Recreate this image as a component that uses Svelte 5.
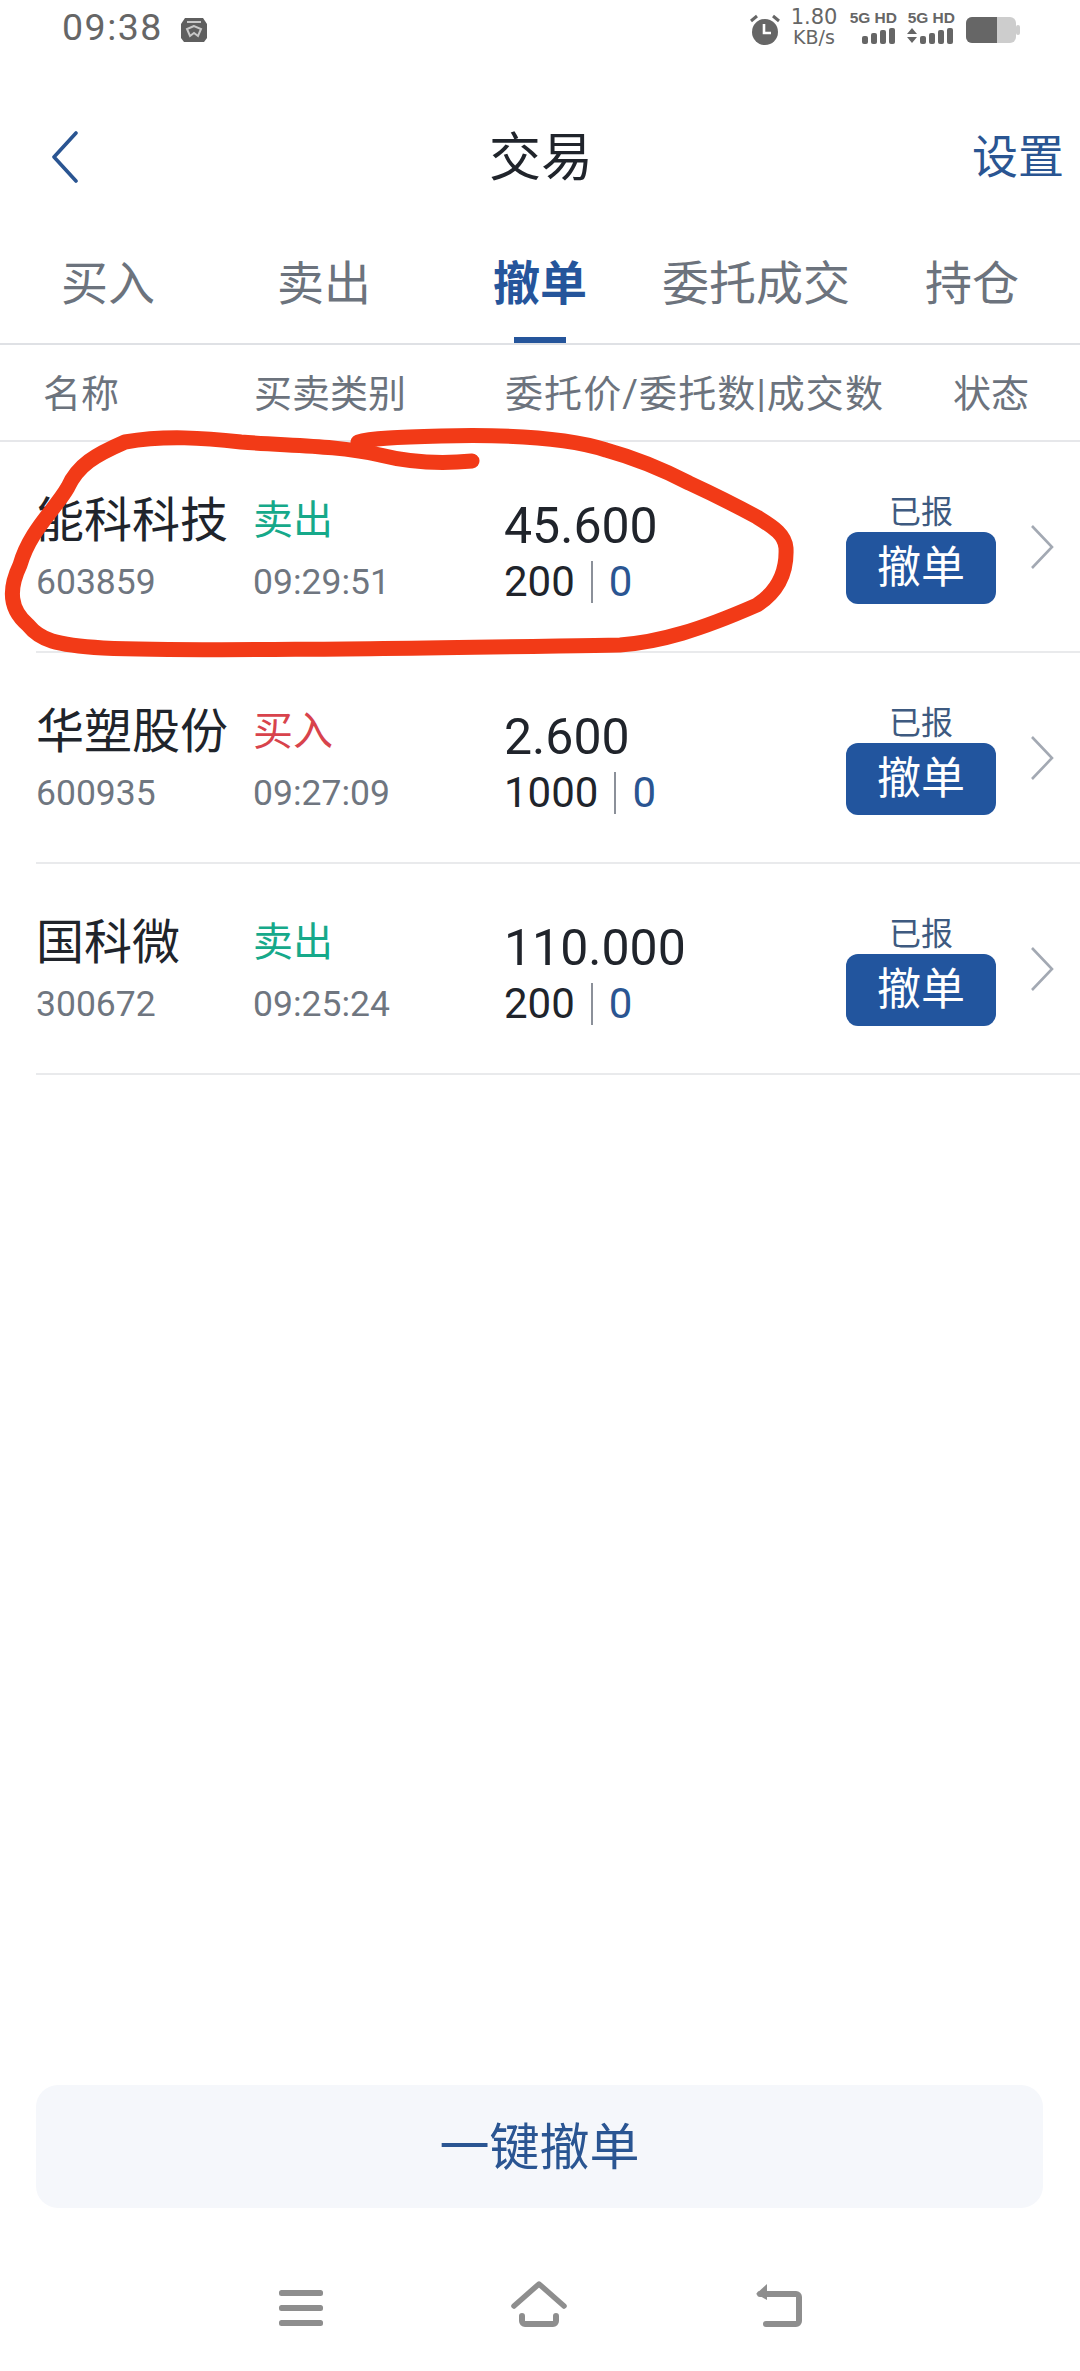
<script>
  const tabs = ['买入', '卖出', '撤单', '委托成交', '持仓'];
  const orders = [
    { name: '能科科技', code: '603859', side: '卖出', sell: true, time: '09:29:51', price: '45.600', qty: '200' },
    { name: '华塑股份', code: '600935', side: '买入', sell: false, time: '09:27:09', price: '2.600', qty: '1000' },
    { name: '国科微', code: '300672', side: '卖出', sell: true, time: '09:25:24', price: '110.000', qty: '200' }
  ];
</script>

<div class="page">
  <div class="status">
    <div class="left">
      <span class="clock">09:38</span>
      <svg class="bug" width="30" height="28" viewBox="0 0 30 28"><path d="M6 3h18l4 6v14l-3 4H5l-3-4V9z" fill="#5f5f5f"/><path d="M8 7h14M15 11l-7 3 3 7 4-3 4 3 3-7z" stroke="#c8c8c8" stroke-width="2" fill="none"/></svg>
    </div>
    <div class="right">
      <svg class="alarm" width="32" height="34" viewBox="0 0 32 34"><circle cx="16" cy="19" r="13" fill="#666"/><path d="M15 11v9h7" stroke="#fff" stroke-width="2.6" fill="none"/><path d="M2 8l6-5M30 8l-6-5" stroke="#666" stroke-width="3"/></svg>
      <div class="speed"><span>1.80</span><span class="unit">KB/s</span></div>
      <div class="sig first">
        <span>5G HD</span>
        <svg width="36" height="18" viewBox="0 0 36 18"><g fill="#666"><rect x="1" y="9" width="6" height="8" rx="2"/><rect x="10" y="6" width="6" height="11" rx="2"/><rect x="19" y="3" width="6" height="14" rx="2"/><rect x="28" y="1" width="6" height="16" rx="2"/></g></svg>
      </div>
      <div class="sig">
        <span>5G HD</span>
        <svg width="48" height="18" viewBox="0 0 48 18"><g fill="#666"><path d="M0 7l5-6 5 6zM0 10l5 6 5-6z"/><rect x="13" y="9" width="6" height="8" rx="2"/><rect x="22" y="6" width="6" height="11" rx="2"/><rect x="31" y="3" width="6" height="14" rx="2"/><rect x="40" y="1" width="6" height="16" rx="2"/></g></svg>
      </div>
      <svg class="batt" width="56" height="28" viewBox="0 0 56 28"><rect x="0" y="1" width="50" height="26" rx="6" fill="#cdcdcd"/><rect x="50" y="9" width="4" height="10" rx="2" fill="#cdcdcd"/><path d="M6 1h25v26H6a6 6 0 0 1-6-6V7a6 6 0 0 1 6-6z" fill="#666"/></svg>
    </div>
  </div>

  <header class="head">
    <svg class="back" width="30" height="52" viewBox="0 0 30 52"><path d="M26 2 L4 26 L26 50" fill="none" stroke="#2a5592" stroke-width="3.6" stroke-linecap="round" stroke-linejoin="round"/></svg>
    <h1>交易</h1>
    <span class="settings">设置</span>
  </header>

  <nav class="tabs">
    {#each tabs as t, i}
      <div class="tab" class:active={i === 2}>{t}</div>
    {/each}
  </nav>

  <div class="cols">
    <span class="c1">名称</span>
    <span class="c2">买卖类别</span>
    <span class="c3">委托价/委托数|成交数</span>
    <span class="c4">状态</span>
  </div>

  <div class="list">
    {#each orders as o}
      <div class="row">
        <div class="stock">
          <div class="name">{o.name}</div>
          <div class="sub">{o.code}</div>
        </div>
        <div class="kind">
          <div class="side" class:sell={o.sell} class:buy={!o.sell}>{o.side}</div>
          <div class="sub">{o.time}</div>
        </div>
        <div class="nums">
          <div class="price">{o.price}</div>
          <div class="qty">{o.qty}<i></i><b>0</b></div>
        </div>
        <div class="state">
          <div class="reported">已报</div>
          <div class="cancel">撤单</div>
        </div>
        <svg class="chev" width="24" height="44" viewBox="0 0 24 44"><path d="M2 1 L22 22 L2 43" fill="none" stroke="#a3a9b3" stroke-width="2.6"/></svg>
      </div>
    {/each}
  </div>

  <div class="foot">
    <div class="all">一键撤单</div>
    <div class="nav">
      <svg width="46" height="38" viewBox="0 0 46 38"><g fill="#8e8e8e"><rect x="1" y="1" width="44" height="6" rx="2.5"/><rect x="1" y="16" width="44" height="6" rx="2.5"/><rect x="1" y="31" width="44" height="6" rx="2.5"/></g></svg>
      <svg width="60" height="46" viewBox="0 0 60 46"><path d="M5 25 L30 3 L55 25" fill="none" stroke="#8e8e8e" stroke-width="5.5" stroke-linecap="round" stroke-linejoin="round"/><path d="M13 35v5a3 3 0 0 0 3 3h28a3 3 0 0 0 3-3v-5" fill="none" stroke="#8e8e8e" stroke-width="6" stroke-linecap="round"/></svg>
      <svg width="50" height="46" viewBox="0 0 50 46"><path d="M6 13H42a3 3 0 0 1 3 3V40a3 3 0 0 1-3 3H12" fill="none" stroke="#8e8e8e" stroke-width="6" stroke-linecap="round"/><path d="M13 3L2 13l11 6z" fill="#8e8e8e"/></svg>
    </div>
  </div>

  <svg class="scribble" width="1080" height="700" viewBox="0 0 1080 700">
    <path d="M472 461 C440 464 412 463 380 455 C335 445 290 446 241 442 C205 438 165 435 125 442 C95 455 78 465 68 487 C55 510 30 530 20 565 C8 590 10 610 28 625 C40 640 55 645 103 648 C200 652 420 648 620 645 C660 642 700 630 757 605 C780 590 787 570 786 548 C785 535 775 528 757 517 C735 505 715 495 689 483 C660 468 635 458 606 450 C575 440 520 434 441 436 C400 437 370 438 358 442" fill="none" stroke="#f23a17" stroke-width="15" stroke-linecap="round" stroke-linejoin="round"/>
  </svg>
</div>

<style>
  :global(body) { margin: 0; background: #fff; }
  .page {
    position: relative;
    width: 1080px;
    height: 2371px;
    display: flex;
    flex-direction: column;
    font-family: Roboto, "Noto Sans CJK SC", sans-serif;
    color: #20242b;
    overflow: hidden;
    background: #fff;
  }
  .status {
    height: 54px;
    display: flex;
    justify-content: space-between;
    align-items: center;
    padding: 0 58px 0 62px;
    box-sizing: border-box;
    color: #666;
  }
  .left { display: flex; align-items: center; gap: 16px; }
  .clock { font-size: 37.5px; letter-spacing: 1.5px; }
  .bug { margin-top: 4px; }
  .right { display: flex; align-items: center; }
  .alarm { margin-top: 6px; }
  .speed { margin-left: 10px; width: 46px; display: flex; flex-direction: column; align-items: center; font-size: 21px; line-height: 20px; font-family: "DejaVu Sans", sans-serif; }
  .speed .unit { font-size: 19px; }
  .sig { margin-left: 10px; display: flex; flex-direction: column; align-items: flex-end; font-size: 15.5px; font-weight: 700; line-height: 18px; width: 48px; white-space: nowrap; font-family: "Liberation Sans", sans-serif; }
  .sig.first { margin-left: 14px; width: 46px; }
  .batt { margin-left: 11px; margin-top: 6px; }

  .head {
    height: 98px;
    margin-top: 54px;
    display: grid;
    grid-template-columns: 1fr auto 1fr;
    align-items: center;
    padding: 0 16px 0 18px;
  }
  .back { justify-self: start; margin-left: 32px; }
  h1 { margin: 3px 0 0; font-size: 52px; font-weight: 400; line-height: 1; }
  .settings { justify-self: end; color: #2a5592; font-size: 46px; line-height: 1; }

  .tabs {
    height: 98px;
    margin-top: 39px;
    display: grid;
    grid-template-columns: repeat(5, 1fr);
    border-bottom: 2px solid #dfe1e5;
  }
  .tab {
    position: relative;
    text-align: center;
    font-size: 47px;
    line-height: 64px;
    color: #6c737d;
    padding-top: 7px;
  }
  .tab.active { color: #25559b; font-weight: 700; }
  .tab.active::after {
    content: "";
    position: absolute;
    left: 82px;
    right: 82px;
    bottom: 0;
    height: 6px;
    background: #25559b;
  }

  .cols {
    height: 95px;
    box-sizing: content-box;
    display: flex;
    align-items: center;
    font-size: 38px;
    color: #6c737d;
    border-bottom: 2px solid #e6e7ea;
    white-space: nowrap;
  }
  .cols span { margin-top: -4px; }
  .c1 { margin-left: 43px; width: 211px; }
  .c2 { width: 251px; }
  .c3 { width: 448px; letter-spacing: 1.1px; }

  .row {
    margin-left: 36px;
    height: 209px;
    display: flex;
    align-items: center;
    border-bottom: 2px solid #e9eaec;
  }
  .stock { width: 217px; margin-top: 4px; }
  .kind { width: 251px; margin-top: 4px; }
  .nums { width: 342px; margin-top: 10px; }
  .name { font-size: 48px; line-height: 60px; white-space: nowrap; }
  .side { font-size: 40px; line-height: 60px; }
  .sell { color: #16a98a; }
  .buy { color: #d8434c; }
  .sub { font-size: 35.5px; line-height: 50px; color: #6f7680; margin-top: 6px; }
  .price { font-size: 50px; line-height: 60px; }
  .qty { font-size: 42px; line-height: 50px; margin-top: 1px; display: flex; align-items: center; }
  .qty i { width: 2px; height: 42px; background: #8b9099; margin: 0 16px; }
  .qty b { font-weight: 400; color: #2a5592; }
  .state { width: 150px; display: flex; flex-direction: column; align-items: center; margin-top: 2px; }
  .reported { font-size: 32px; line-height: 40px; color: #3e5a80; }
  .cancel {
    width: 150px;
    height: 72px;
    border-radius: 12px;
    background: #22559e;
    color: #fff;
    font-size: 44px;
    line-height: 72px;
    text-align: center;
  }
  .chev { margin-left: 34px; }

  .foot { margin-top: auto; display: flex; flex-direction: column; }
  .all {
    margin: 0 37px 0 36px;
    height: 123px;
    border-radius: 22px;
    background: #f5f7fb;
    color: #2a5592;
    font-size: 50px;
    line-height: 126px;
    text-align: center;
  }
  .nav {
    height: 163px;
    padding: 0 276px 44px 278px;
    box-sizing: border-box;
    display: flex;
    justify-content: space-between;
    align-items: flex-end;
  }
  .scribble { position: absolute; left: 0; top: 0; pointer-events: none; }
</style>
